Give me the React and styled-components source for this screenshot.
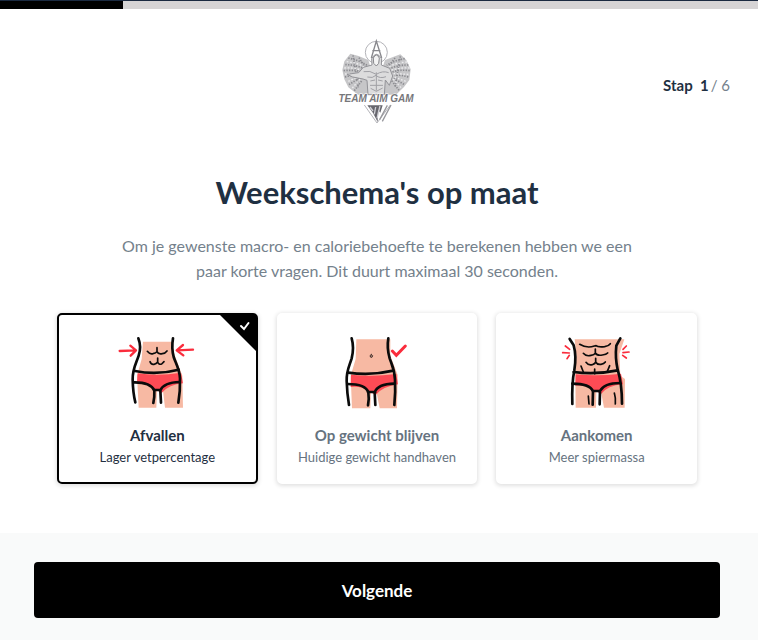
import React, { useState } from "react";
import styled, { createGlobalStyle } from "styled-components";

const TOTAL_STEPS = 6;

const goals = [
  { id: "lose", title: "Afvallen", text: "Lager vetpercentage" },
  { id: "keep", title: "Op gewicht blijven", text: "Huidige gewicht handhaven" },
  { id: "gain", title: "Aankomen", text: "Meer spiermassa" },
];

const App = () => {
  const [goal, setGoal] = useState("lose");

  return (
    <Page>
      <GlobalStyle />
      <ProgressTrack>
        <ProgressBar />
      </ProgressTrack>

      <Header>
        <Logo />
        <Step>
          <StepNow>Stap&nbsp; 1</StepNow>
          <span>/ {TOTAL_STEPS}</span>
        </Step>
      </Header>

      <Main>
        <Title>Weekschema's op maat</Title>
        <Intro>
          Om je gewenste macro- en caloriebehoefte te berekenen hebben we een
          paar korte vragen. Dit duurt maximaal 30 seconden.
        </Intro>
        <Cards role="radiogroup" aria-label="Doel">
          {goals.map((item) => (
            <Card key={item.id} $active={goal === item.id}>
              <Radio
                type="radio"
                name="goal"
                value={item.id}
                checked={goal === item.id}
                onChange={() => setGoal(item.id)}
              />
              {goal === item.id && <Corner />}
              <Figure id={item.id} />
              <CardTitle>{item.title}</CardTitle>
              <CardText>{item.text}</CardText>
            </Card>
          ))}
        </Cards>
      </Main>

      <Footer>
        <NextButton type="button">Volgende</NextButton>
      </Footer>
    </Page>
  );
};

// drawings

const Corner = () => (
  <CornerSvg viewBox="0 0 36 36" aria-hidden="true">
    <path d="M0 0H36V36Z" fill="#000" />
    <path
      d="M21 11l3 3 4.500-6"
      fill="none"
      stroke="#fff"
      strokeWidth="2"
      strokeLinecap="round"
    />
  </CornerSvg>
);

const Figure = ({ id }) => (
  <FigureSvg viewBox="202 88 240 228" aria-hidden="true">
    {id === "lose" && <LoseFigure />}
    {id === "keep" && <KeepFigure />}
    {id === "gain" && <GainFigure />}
  </FigureSvg>
);

const LoseFigure = () => (
  <>
    <Skin d="M280 108H368L372 140 398 210 400 306H346L340 256 322 256 320 306H267L262 210 276 160Z" />
    <Brief d="M264 203Q325 212 394 201L400 233Q358 236 336 262L314 250Q296 232 262 230Z" />
    <Line d="M266 98Q276 124 267 150C260 172 248 190 249 222Q250 262 257 290" />
    <Line d="M370 98Q365 128 372 154C378 172 390 190 391 218Q392 258 386 291" />
    <Line d="M256 196Q322 209 387 192" />
    <Line d="M252 230Q302 229 314 254Q315 274 311 292" />
    <Line d="M390 229Q343 230 332 254L334 291M313 253H333" />
    <Thin d="M293 137Q301 147 310 144 319 143 322 138 326 147 338 144 346 144 352 136M322 126V138" />
    <Thin d="M301 168Q305 178 313 176 320 175 324 169 327 178 336 175L343 168M324 157V169" />
    <Red d="M210 136L259 134M242 120L259 134 243 150" />
    <Red d="M430 132L382 134M400 118L381 134 401 149" />
  </>
);

const KeepFigure = () => (
  <>
    <Skin d="M260 101H362V150L384 208 382 308H330L320 257 304 257 302 308H247L243 210 258 160Z" />
    <Brief d="M244 207Q307 214 380 205L385 236Q340 242 318 268L296 256Q274 240 243 244Z" />
    <Line d="M246 98Q254 126 246 158C239 182 230 194 231 226Q232 262 238 298" />
    <Line d="M356 98Q351 128 360 158C366 176 375 190 376 222Q378 260 374 298" />
    <Line d="M236 201Q302 211 371 195" />
    <Line d="M233 235Q288 235 296 260Q299 280 295 299" />
    <Line d="M374 234Q324 235 315 260L317 298M295 259H317" />
    <path
      d="M307 145Q299 148 302 154 308 158 309 150H305"
      fill="none"
      stroke="#3a2a26"
      strokeWidth="3"
    />
    <path
      d="M368 136L380 149 407 121"
      fill="none"
      stroke="#fa2c3c"
      strokeWidth="9"
      strokeLinecap="round"
    />
  </>
);

const GainFigure = () => (
  <>
    <Skin d="M255 101H404L389 145 392 210 406 220 405 306H343L334 258 320 258 319 306H258L257 205 260 150Z" />
    <Brief d="M258 206Q324 212 394 204L400 236Q353 240 334 265L311 252Q293 238 257 240Z" />
    <Line d="M240 100L252 119Q261 150 254 194Q246 232 248 295" />
    <Line d="M392 98L380 120Q376 156 384 192Q397 234 397 294" />
    <Line d="M252 199Q316 208 384 194" />
    <Line d="M248 234Q300 234 310 257L309 297" />
    <Line d="M391 232Q343 232 331 256L330 296M310 256H331" />
    <Thin d="M270 116Q292 129 314 121 318 120 319 120 324 125 345 123 357 121 362 114" />
    <Thin d="M281 143Q289 153 304 149 314 148 317 142 322 151 338 148 350 147 354 142M317 130V143" />
    <Thin d="M289 170Q296 180 308 177 317 174 318 169 323 178 334 176 343 175 347 169M318 158V170" />
    <Thin d="M274 181L281 199M360 180L353 197M315 190V204M296 271L298 295M374 262Q379 278 377 295" />
    <Spark d="M227 121L240 131M219 141L239 142M232 159L239 149" />
    <Spark d="M410 121L400 131M418 139L400 141M410 157L399 149" />
  </>
);

const Logo = () => (
  <LogoSvg viewBox="0 0 240 258" role="img" aria-label="Team Aim Gam">
    <path
      d="M94 66Q66 52 40 47L22 70 16 96 22 124 34 148 63 170H177L201 147 217 126 221 94 208 66 190 49 144 66 134 96H103Z"
      fill="#c6c6c8"
    />
    <g fill="none" stroke="#8b8b90" strokeWidth="5" strokeDasharray="4 4">
      <path d="M34 60Q64 66 90 82M25 80Q54 80 82 92M20 98Q48 95 74 101M24 117Q43 111 64 112M36 140L66 121M52 158L76 126" />
      <path d="M203 62Q175 66 149 82M214 81Q186 80 158 92M218 98Q190 94 165 102M214 117Q191 110 173 112M201 139L169 121M186 157L164 128" />
      <path d="M48 52L64 148M66 59L83 86M190 55L174 147M174 60L155 85" />
    </g>
    <g fill="none" stroke="#ececee" strokeWidth="4" strokeDasharray="5 5">
      <path d="M29 71Q62 74 84 88M22 90Q49 88 76 97M24 108L65 106M34 130L63 116M46 150L70 122" />
      <path d="M210 72Q175 74 153 88M218 90Q188 88 162 97M214 109L170 107M206 130L172 117M192 149L168 122" />
    </g>
    <g fill="none" stroke="#b4b4b9" strokeWidth="3">
      <circle cx="118" cy="43" r="33" />
      <path d="M103 60L118 9 134 60M106 38H130" stroke="#88888d" strokeWidth="4" />
      <path d="M82 201L120 255 160 201" />
    </g>
    <path
      d="M104 62Q118 36 134 62L133 81 158 91 167 114 157 142 145 126 142 170H93L90 127 78 123 47 117 30 109 65 104 79 88 105 81Z"
      fill="#dcdcdd"
      stroke="#939398"
      strokeWidth="3"
    />
    <path
      d="M109 60Q118 42 127 60L125 76 118 84 110 76Z"
      fill="#f3f3f3"
      stroke="#88888d"
      strokeWidth="3"
    />
    <path
      d="M80 101Q98 96 118 109 137 97 155 104M91 117Q107 122 117 112 128 123 147 116M118 103V158M100 129L114 126M123 126L137 129M99 142H138M101 151L118 160 137 150"
      fill="none"
      stroke="#a0a0a5"
      strokeWidth="3"
    />
    <path d="M91 202L137 202 130 224 123 216 122 252 108 225Z" fill="#66666d" />
    <path d="M99 207L108 219M116 207L112 229M129 204L120 241" stroke="#d0d0d6" strokeWidth="4" />
    <path d="M151 202L128 245M162 201L136 250" stroke="#98989d" strokeWidth="4" />
    <LogoText x="117" y="192" textAnchor="middle">
      TEAM AIM GAM
    </LogoText>
  </LogoSvg>
);

// styling

const GlobalStyle = createGlobalStyle`
  * {
    box-sizing: border-box;
  }
  body {
    margin: 0;
    background: #fff;
    font-family: Lato, "Open Sans", sans-serif;
    color: #1f3042;
  }
`;

const Page = styled.div`
  min-height: 100vh;
  display: flex;
  flex-direction: column;
`;

const ProgressTrack = styled.div`
  height: 9px;
  border-top: 1px solid #1b2a41;
  background: #d6d4d5;
`;

const ProgressBar = styled.div`
  width: 16.2%;
  height: 100%;
  background: #000;
`;

const Header = styled.header`
  display: grid;
  grid-template-columns: 1fr auto 1fr;
  align-items: center;
  padding: 29px 28px 0 24px;
`;

const Step = styled.div`
  grid-column: 3;
  justify-self: end;
  display: flex;
  gap: 2px;
  padding-top: 8px;
  font-size: 15px;
  line-height: 20px;
  color: #74818c;
`;

const StepNow = styled.b`
  color: #1f3042;
`;

const Main = styled.main`
  flex: 1;
  display: flex;
  flex-direction: column;
  align-items: center;
  padding: 48px 61px 48px 57px;
`;

const Title = styled.h1`
  margin: 0;
  font-size: 31px;
  line-height: 40px;
  font-weight: 700;
  text-align: center;
`;

const Intro = styled.p`
  max-width: 530px;
  margin: 21px 0 30px;
  font-size: 16px;
  line-height: 25px;
  text-align: center;
  color: #74818c;
`;

const Cards = styled.div`
  width: 100%;
  display: grid;
  grid-template-columns: repeat(3, 1fr);
  gap: 19px;
`;

const Card = styled.label`
  position: relative;
  display: flex;
  flex-direction: column;
  align-items: center;
  padding: 20px 4px 14px;
  border: 2px solid ${(props) => (props.$active ? "#000" : "#fff")};
  border-radius: 5px;
  background: #fff;
  box-shadow: 0 1px 4px 1px rgba(0, 0, 0, 0.12);
  color: ${(props) => (props.$active ? "#1f3042" : "#66737f")};
  text-align: center;
  cursor: pointer;
`;

const Radio = styled.input`
  position: absolute;
  opacity: 0;
  margin: 0;
`;

const CornerSvg = styled.svg`
  position: absolute;
  top: 0;
  right: 0;
  width: 36px;
  height: 36px;
`;

const FigureSvg = styled.svg`
  width: 80px;
  height: 76px;
`;

const Skin = styled.path`
  fill: #f7b9a3;
`;

const Brief = styled.path`
  fill: #ff4b55;
`;

const Line = styled.path`
  fill: none;
  stroke: #0b0b0b;
  stroke-width: 8px;
  stroke-linecap: round;
  stroke-linejoin: round;
`;

const Thin = styled(Line)`
  stroke-width: 5px;
`;

const Red = styled(Line)`
  stroke: #fa2c3c;
  stroke-width: 7px;
`;

const Spark = styled(Red)`
  stroke-width: 5px;
`;

const CardTitle = styled.span`
  margin-top: 13px;
  font-size: 15px;
  line-height: 22px;
  font-weight: 700;
`;

const CardText = styled.span`
  font-size: 13px;
  line-height: 22px;
`;

const LogoSvg = styled.svg`
  grid-column: 2;
  width: 80px;
  height: 86px;
`;

const LogoText = styled.text`
  font-family: "Liberation Sans", sans-serif;
  font-size: 30px;
  font-weight: 700;
  font-style: italic;
  fill: #77777b;
  stroke: #fff;
  stroke-width: 3px;
  paint-order: stroke;
`;

const Footer = styled.footer`
  padding: 29px 38px 22px 34px;
  background: #f9fafa;
`;

const NextButton = styled.button`
  width: 100%;
  height: 56px;
  border: 0;
  border-radius: 4px;
  background: #000;
  color: #fff;
  font-family: inherit;
  font-size: 17px;
  font-weight: 700;
  cursor: pointer;
`;

export default App;
